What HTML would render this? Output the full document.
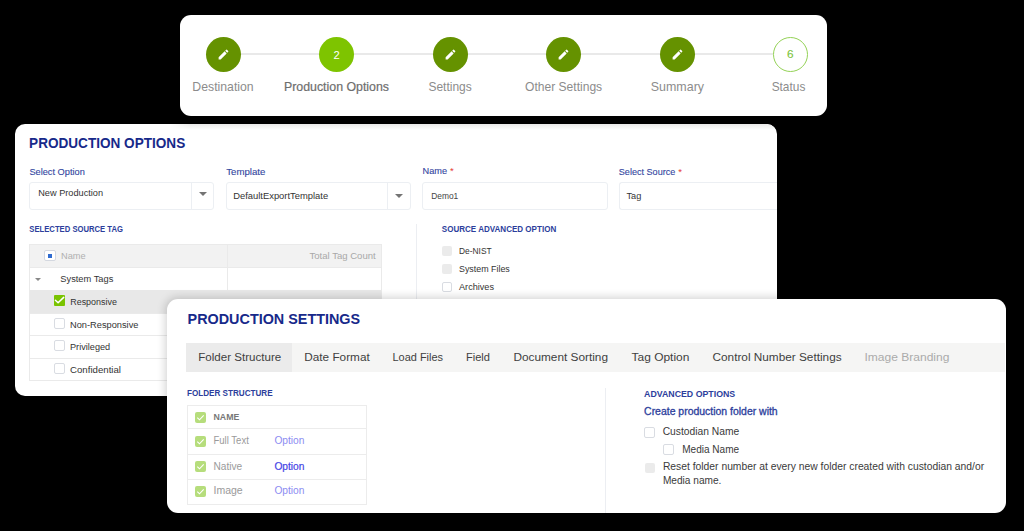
<!DOCTYPE html>
<html><head><meta charset="utf-8"><style>
html,body{margin:0;padding:0;}
body{width:1024px;height:531px;background:#000;position:relative;overflow:hidden;font-family:"Liberation Sans",sans-serif;}
.t{position:absolute;line-height:1;white-space:nowrap;}
.r{position:absolute;}
.r svg{display:block;}
.tx{position:absolute;left:0;top:0;font-family:"Liberation Sans",sans-serif;}
</style></head><body>
<div class="r" style="left:15.30px;top:124.00px;width:761.50px;height:271.50px;background:#fff;border-radius:10px;"></div>
<div class="r" style="left:170.00px;top:124.00px;width:606.80px;height:16.00px;background:linear-gradient(#e9e9e9, #f4f4f3 2.7px, #fafbfc 4.8px, rgba(255,255,255,0) 6px);border-top-right-radius:10px;-webkit-mask-image:linear-gradient(90deg, transparent, #000 20px);"></div>
<div class="r" style="left:29.20px;top:182.00px;width:185.10px;height:27.70px;background:#fff;border:1px solid #eceff3;box-sizing:border-box;border-radius:3px;"></div>
<div class="r" style="left:191.00px;top:182.00px;width:1.00px;height:27.70px;background:#eceff3;"></div>
<div class="r" style="left:198.5px;top:191.8px;width:0;height:0;border-left:4px solid transparent;border-right:4px solid transparent;border-top:4px solid #747474;"></div>
<div class="r" style="left:225.70px;top:182.00px;width:185.60px;height:27.50px;background:#fff;border:1px solid #eceff3;box-sizing:border-box;border-radius:3px;"></div>
<div class="r" style="left:387.30px;top:182.00px;width:1.00px;height:27.50px;background:#eceff3;"></div>
<div class="r" style="left:395px;top:194.3px;width:0;height:0;border-left:4px solid transparent;border-right:4px solid transparent;border-top:4px solid #747474;"></div>
<div class="r" style="left:422.00px;top:182.00px;width:185.60px;height:27.70px;background:#fff;border:1px solid #eceff3;box-sizing:border-box;border-radius:3px;"></div>
<div class="r" style="left:618.70px;top:182.00px;width:158.10px;height:27.70px;background:#fff;border:1px solid #eceff3;box-sizing:border-box;border-right:none;border-radius:3px 0 0 3px;"></div>
<div class="r" style="left:29.00px;top:244.40px;width:352.70px;height:136.40px;background:#fff;border:1px solid #eaeaea;box-sizing:border-box;"></div>
<div class="r" style="left:29.00px;top:244.40px;width:352.70px;height:23.40px;background:#f2f2f2;border:1px solid #eaeaea;box-sizing:border-box;"></div>
<div class="r" style="left:227.00px;top:244.40px;width:1.00px;height:45.60px;background:#eaeaea;"></div>
<div class="r" style="left:29.00px;top:289.50px;width:352.70px;height:1.00px;background:#eaeaea;"></div>
<div class="r" style="left:29.00px;top:312.70px;width:352.70px;height:1.00px;background:#eaeaea;"></div>
<div class="r" style="left:29.00px;top:334.90px;width:352.70px;height:1.00px;background:#eaeaea;"></div>
<div class="r" style="left:29.00px;top:357.80px;width:352.70px;height:1.00px;background:#eaeaea;"></div>
<div class="r" style="left:29.50px;top:289.80px;width:351.70px;height:23.40px;background:#e8e8e8;"></div>
<div class="r" style="left:44.20px;top:250.30px;width:11.50px;height:11.20px;background:#fff;border:1px solid #d4d8e0;box-sizing:border-box;border-radius:2px;"></div>
<div class="r" style="left:48.40px;top:254.20px;width:4.00px;height:4.00px;background:#2f6bd0;"></div>
<div class="r" style="left:34.8px;top:278px;width:0;height:0;border-left:3px solid transparent;border-right:3px solid transparent;border-top:3.3px solid #888;"></div>
<div class="r" style="left:54px;top:295px;width:11px;height:11px;background:#79c300;border-radius:1px;"><svg width="11" height="11" viewBox="0 0 11 11"><path d="M1.4 5.3 L4.1 7.8 L9.7 2.4" stroke="#fff" stroke-width="1.5" fill="none" stroke-linecap="round" stroke-linejoin="round"/></svg></div>
<div class="r" style="left:53.60px;top:317.80px;width:11.30px;height:11.20px;background:#fff;border:1px solid #d9dce2;box-sizing:border-box;border-radius:2px;"></div>
<div class="r" style="left:53.60px;top:340.10px;width:11.30px;height:11.20px;background:#fff;border:1px solid #d9dce2;box-sizing:border-box;border-radius:2px;"></div>
<div class="r" style="left:53.60px;top:363.00px;width:11.30px;height:11.20px;background:#fff;border:1px solid #d9dce2;box-sizing:border-box;border-radius:2px;"></div>
<div class="r" style="left:416.20px;top:224.00px;width:1.00px;height:171.00px;background:#eceef2;"></div>
<div class="r" style="left:441.80px;top:246.00px;width:10.10px;height:10.00px;background:#ebebeb;border-radius:2px;"></div>
<div class="r" style="left:441.80px;top:264.00px;width:10.10px;height:10.00px;background:#ebebeb;border-radius:2px;"></div>
<div class="r" style="left:441.80px;top:282.00px;width:10.10px;height:10.30px;background:#fff;border:1px solid #d9dce2;box-sizing:border-box;border-radius:2px;"></div>
<svg class="tx" width="1024" height="531" viewBox="0 0 1024 531"><text x="29.10" y="147.80" font-size="14" fill="#17298a" font-weight="700" textLength="156.10" lengthAdjust="spacingAndGlyphs">PRODUCTION OPTIONS</text><text x="29.40" y="174.50" font-size="9.2" fill="#3346a0" textLength="55.40" lengthAdjust="spacingAndGlyphs" stroke="#3346a0" stroke-width="0.12">Select Option</text><text x="226.30" y="174.50" font-size="9.2" fill="#3346a0" textLength="39.10" lengthAdjust="spacingAndGlyphs" stroke="#3346a0" stroke-width="0.12">Template</text><text x="422.50" y="174.40" font-size="9.2" fill="#3346a0" textLength="24.50" lengthAdjust="spacingAndGlyphs" stroke="#3346a0" stroke-width="0.12">Name</text><text x="450.00" y="174.40" font-size="9.5" fill="#e53935">*</text><text x="618.80" y="174.50" font-size="9.2" fill="#3346a0" textLength="56.50" lengthAdjust="spacingAndGlyphs" stroke="#3346a0" stroke-width="0.12">Select Source</text><text x="678.20" y="174.50" font-size="9.5" fill="#e53935">*</text><text x="38.20" y="196.00" font-size="9.3" fill="#333" textLength="64.90" lengthAdjust="spacingAndGlyphs">New Production</text><text x="233.20" y="199.00" font-size="9.3" fill="#333" textLength="95.00" lengthAdjust="spacingAndGlyphs">DefaultExportTemplate</text><text x="431.20" y="198.60" font-size="9.3" fill="#444" textLength="27.10" lengthAdjust="spacingAndGlyphs">Demo1</text><text x="626.50" y="198.60" font-size="9.3" fill="#333" textLength="14.80" lengthAdjust="spacingAndGlyphs">Tag</text><text x="29.30" y="231.80" font-size="8.3" fill="#2c3e9c" font-weight="700" textLength="93.70" lengthAdjust="spacingAndGlyphs">SELECTED SOURCE TAG</text><text x="61.00" y="259.10" font-size="9.2" fill="#b0b0b0" textLength="24.60" lengthAdjust="spacingAndGlyphs">Name</text><text x="375.70" y="258.90" font-size="9.2" fill="#a8a8a8" text-anchor="end" textLength="66.20" lengthAdjust="spacingAndGlyphs">Total Tag Count</text><text x="60.30" y="281.90" font-size="9.2" fill="#333" textLength="53.00" lengthAdjust="spacingAndGlyphs">System Tags</text><text x="70.20" y="305.00" font-size="9.2" fill="#333" textLength="46.80" lengthAdjust="spacingAndGlyphs">Responsive</text><text x="70.00" y="327.70" font-size="9.2" fill="#333" textLength="68.40" lengthAdjust="spacingAndGlyphs">Non-Responsive</text><text x="70.00" y="350.30" font-size="9.2" fill="#333" textLength="40.20" lengthAdjust="spacingAndGlyphs">Privileged</text><text x="70.00" y="372.60" font-size="9.2" fill="#333" textLength="51.00" lengthAdjust="spacingAndGlyphs">Confidential</text><text x="441.80" y="232.20" font-size="8.4" fill="#2c3e9c" font-weight="700" textLength="114.40" lengthAdjust="spacingAndGlyphs">SOURCE ADVANCED OPTION</text><text x="459.00" y="253.70" font-size="9.0" fill="#333" textLength="32.60" lengthAdjust="spacingAndGlyphs">De-NIST</text><text x="459.00" y="271.90" font-size="9.0" fill="#333" textLength="50.80" lengthAdjust="spacingAndGlyphs">System Files</text><text x="459.00" y="289.70" font-size="9.0" fill="#333" textLength="35.00" lengthAdjust="spacingAndGlyphs">Archives</text></svg>
<div class="r" style="left:180.30px;top:15.30px;width:646.70px;height:101.20px;background:#fff;border-radius:11px;"></div>
<div class="r" style="left:223.00px;top:53.20px;width:557.00px;height:1.60px;background:#e9e9e9;"></div>
<div class="r" style="left:205.50px;top:36.50px;width:35.00px;height:35.00px;background:#659200;border-radius:18px;"></div>
<div class="r" style="left:216.70px;top:47.7px;width:13px;height:13px;"><svg width="13" height="13" viewBox="0 0 24 24"><path fill="#fff" d="M3 17.25V21h3.75L17.81 9.94l-3.75-3.75L3 17.25zM20.71 7.04a1 1 0 0 0 0-1.41l-2.34-2.34a1 1 0 0 0-1.41 0l-1.83 1.83 3.75 3.75 1.83-1.83z"/></svg></div>
<div class="r" style="left:319.00px;top:36.50px;width:35.00px;height:35.00px;background:#7ec400;border-radius:18px;"></div>
<div class="r" style="left:432.50px;top:36.50px;width:35.00px;height:35.00px;background:#659200;border-radius:18px;"></div>
<div class="r" style="left:443.70px;top:47.7px;width:13px;height:13px;"><svg width="13" height="13" viewBox="0 0 24 24"><path fill="#fff" d="M3 17.25V21h3.75L17.81 9.94l-3.75-3.75L3 17.25zM20.71 7.04a1 1 0 0 0 0-1.41l-2.34-2.34a1 1 0 0 0-1.41 0l-1.83 1.83 3.75 3.75 1.83-1.83z"/></svg></div>
<div class="r" style="left:546.00px;top:36.50px;width:35.00px;height:35.00px;background:#659200;border-radius:18px;"></div>
<div class="r" style="left:557.20px;top:47.7px;width:13px;height:13px;"><svg width="13" height="13" viewBox="0 0 24 24"><path fill="#fff" d="M3 17.25V21h3.75L17.81 9.94l-3.75-3.75L3 17.25zM20.71 7.04a1 1 0 0 0 0-1.41l-2.34-2.34a1 1 0 0 0-1.41 0l-1.83 1.83 3.75 3.75 1.83-1.83z"/></svg></div>
<div class="r" style="left:659.50px;top:36.50px;width:35.00px;height:35.00px;background:#659200;border-radius:18px;"></div>
<div class="r" style="left:670.70px;top:47.7px;width:13px;height:13px;"><svg width="13" height="13" viewBox="0 0 24 24"><path fill="#fff" d="M3 17.25V21h3.75L17.81 9.94l-3.75-3.75L3 17.25zM20.71 7.04a1 1 0 0 0 0-1.41l-2.34-2.34a1 1 0 0 0-1.41 0l-1.83 1.83 3.75 3.75 1.83-1.83z"/></svg></div>
<div class="r" style="left:772.80px;top:36.60px;width:35.00px;height:35.00px;background:#fff;border:1.2px solid #94d256;box-sizing:border-box;border-radius:18px;"></div>
<svg class="tx" width="1024" height="531" viewBox="0 0 1024 531"><text x="223.00" y="90.60" font-size="12.1" fill="#8c8c8c" text-anchor="middle" textLength="61.30" lengthAdjust="spacingAndGlyphs">Destination</text><text x="336.50" y="58.60" font-size="11.2" fill="#fff" text-anchor="middle">2</text><text x="336.50" y="90.60" font-size="12.1" fill="#6e6e6e" text-anchor="middle" textLength="105.10" lengthAdjust="spacingAndGlyphs" stroke="#6e6e6e" stroke-width="0.2">Production Options</text><text x="450.10" y="90.60" font-size="12.1" fill="#8c8c8c" text-anchor="middle" textLength="43.30" lengthAdjust="spacingAndGlyphs">Settings</text><text x="563.60" y="90.60" font-size="12.1" fill="#8c8c8c" text-anchor="middle" textLength="77.10" lengthAdjust="spacingAndGlyphs">Other Settings</text><text x="677.40" y="90.60" font-size="12.1" fill="#8c8c8c" text-anchor="middle" textLength="53.20" lengthAdjust="spacingAndGlyphs">Summary</text><text x="790.30" y="58.20" font-size="11.8" fill="#7cc43a" text-anchor="middle" stroke="#7cc43a" stroke-width="0.1">6</text><text x="788.50" y="90.60" font-size="12.1" fill="#8c8c8c" text-anchor="middle" textLength="33.70" lengthAdjust="spacingAndGlyphs">Status</text></svg>
<div class="r" style="left:166.50px;top:299.00px;width:839.70px;height:214.20px;background:#fff;border-radius:11px;box-shadow:0 0 8px 2px rgba(0,0,0,0.17);"></div>
<div class="r" style="left:186.40px;top:343.20px;width:818.60px;height:28.80px;background:#f5f5f4;"></div>
<div class="r" style="left:186.40px;top:343.20px;width:105.80px;height:28.80px;background:#ebebeb;"></div>
<div class="r" style="left:186.50px;top:405.40px;width:180.90px;height:99.20px;background:#fff;border:1px solid #ececec;box-sizing:border-box;"></div>
<div class="r" style="left:186.50px;top:428.00px;width:180.90px;height:1.00px;background:#ececec;"></div>
<div class="r" style="left:186.50px;top:453.80px;width:180.90px;height:1.00px;background:#ececec;"></div>
<div class="r" style="left:186.50px;top:478.90px;width:180.90px;height:1.00px;background:#ececec;"></div>
<div class="r" style="left:195.1px;top:411.60px;width:11px;height:11px;background:#b6dd7c;border-radius:2px;"><svg width="11" height="11" viewBox="0 0 11 11"><path d="M2.3 5.7 L4.5 7.8 L8.7 3.3" stroke="#fff" stroke-width="1.1" fill="none"/></svg></div>
<div class="r" style="left:195.1px;top:435.50px;width:11px;height:11px;background:#b6dd7c;border-radius:2px;"><svg width="11" height="11" viewBox="0 0 11 11"><path d="M2.3 5.7 L4.5 7.8 L8.7 3.3" stroke="#fff" stroke-width="1.1" fill="none"/></svg></div>
<div class="r" style="left:195.1px;top:461.00px;width:11px;height:11px;background:#b6dd7c;border-radius:2px;"><svg width="11" height="11" viewBox="0 0 11 11"><path d="M2.3 5.7 L4.5 7.8 L8.7 3.3" stroke="#fff" stroke-width="1.1" fill="none"/></svg></div>
<div class="r" style="left:195.1px;top:485.60px;width:11px;height:11px;background:#b6dd7c;border-radius:2px;"><svg width="11" height="11" viewBox="0 0 11 11"><path d="M2.3 5.7 L4.5 7.8 L8.7 3.3" stroke="#fff" stroke-width="1.1" fill="none"/></svg></div>
<div class="r" style="left:605.20px;top:388.00px;width:1.00px;height:125.00px;background:#eceef2;"></div>
<div class="r" style="left:644.10px;top:426.50px;width:11.20px;height:11.00px;background:#fff;border:1px solid #d9dce2;box-sizing:border-box;border-radius:2px;"></div>
<div class="r" style="left:663.10px;top:444.30px;width:11.10px;height:11.20px;background:#fff;border:1px solid #d9dce2;box-sizing:border-box;border-radius:2px;"></div>
<div class="r" style="left:644.50px;top:462.70px;width:10.80px;height:10.80px;background:#ebebeb;border-radius:2px;"></div>
<svg class="tx" width="1024" height="531" viewBox="0 0 1024 531"><text x="187.60" y="323.70" font-size="14.6" fill="#17298a" font-weight="700" textLength="172.50" lengthAdjust="spacingAndGlyphs">PRODUCTION SETTINGS</text><text x="198.20" y="360.60" font-size="11.7" fill="#3f3f3f" textLength="83.00" lengthAdjust="spacingAndGlyphs">Folder Structure</text><text x="304.30" y="360.60" font-size="11.7" fill="#3f3f3f" textLength="65.40" lengthAdjust="spacingAndGlyphs">Date Format</text><text x="392.50" y="360.60" font-size="11.7" fill="#3f3f3f" textLength="50.50" lengthAdjust="spacingAndGlyphs">Load Files</text><text x="466.00" y="360.60" font-size="11.7" fill="#3f3f3f" textLength="24.00" lengthAdjust="spacingAndGlyphs">Field</text><text x="513.40" y="360.60" font-size="11.7" fill="#3f3f3f" textLength="94.60" lengthAdjust="spacingAndGlyphs">Document Sorting</text><text x="631.60" y="360.60" font-size="11.7" fill="#3f3f3f" textLength="57.80" lengthAdjust="spacingAndGlyphs">Tag Option</text><text x="712.50" y="360.60" font-size="11.7" fill="#3f3f3f" textLength="129.10" lengthAdjust="spacingAndGlyphs">Control Number Settings</text><text x="864.40" y="360.60" font-size="11.7" fill="#ababab" textLength="85.00" lengthAdjust="spacingAndGlyphs">Image Branding</text><text x="187.00" y="396.00" font-size="9.2" fill="#2c3e9c" font-weight="700" textLength="85.60" lengthAdjust="spacingAndGlyphs">FOLDER STRUCTURE</text><text x="213.50" y="420.00" font-size="9.1" fill="#777" font-weight="700" textLength="25.80" lengthAdjust="spacingAndGlyphs">NAME</text><text x="213.50" y="444.20" font-size="10.0" fill="#9a9a9a" textLength="35.30" lengthAdjust="spacingAndGlyphs">Full Text</text><text x="274.40" y="444.20" font-size="10.0" fill="#8c8cf2" textLength="30.10" lengthAdjust="spacingAndGlyphs">Option</text><text x="213.50" y="469.60" font-size="10.0" fill="#9a9a9a" textLength="28.70" lengthAdjust="spacingAndGlyphs">Native</text><text x="274.40" y="469.60" font-size="10.0" fill="#4545e6" textLength="30.10" lengthAdjust="spacingAndGlyphs" stroke="#4545e6" stroke-width="0.2">Option</text><text x="213.50" y="494.00" font-size="10.0" fill="#9a9a9a" textLength="29.20" lengthAdjust="spacingAndGlyphs">Image</text><text x="274.40" y="494.00" font-size="10.0" fill="#8c8cf2" textLength="30.10" lengthAdjust="spacingAndGlyphs">Option</text><text x="644.10" y="396.70" font-size="9.2" fill="#2c3e9c" font-weight="700" textLength="91.10" lengthAdjust="spacingAndGlyphs">ADVANCED OPTIONS</text><text x="644.10" y="415.00" font-size="10.0" fill="#2c3e9c" textLength="133.60" lengthAdjust="spacingAndGlyphs" stroke="#2c3e9c" stroke-width="0.3">Create production folder with</text><text x="662.70" y="434.50" font-size="10.2" fill="#3a3a3a" textLength="76.60" lengthAdjust="spacingAndGlyphs">Custodian Name</text><text x="682.20" y="452.70" font-size="10.2" fill="#3a3a3a" textLength="57.00" lengthAdjust="spacingAndGlyphs">Media Name</text><text x="662.90" y="470.30" font-size="10.2" fill="#3a3a3a" textLength="321.20" lengthAdjust="spacingAndGlyphs">Reset folder number at every new folder created with custodian and/or</text><text x="662.90" y="484.40" font-size="10.2" fill="#3a3a3a" textLength="58.50" lengthAdjust="spacingAndGlyphs">Media name.</text></svg>
</body></html>
